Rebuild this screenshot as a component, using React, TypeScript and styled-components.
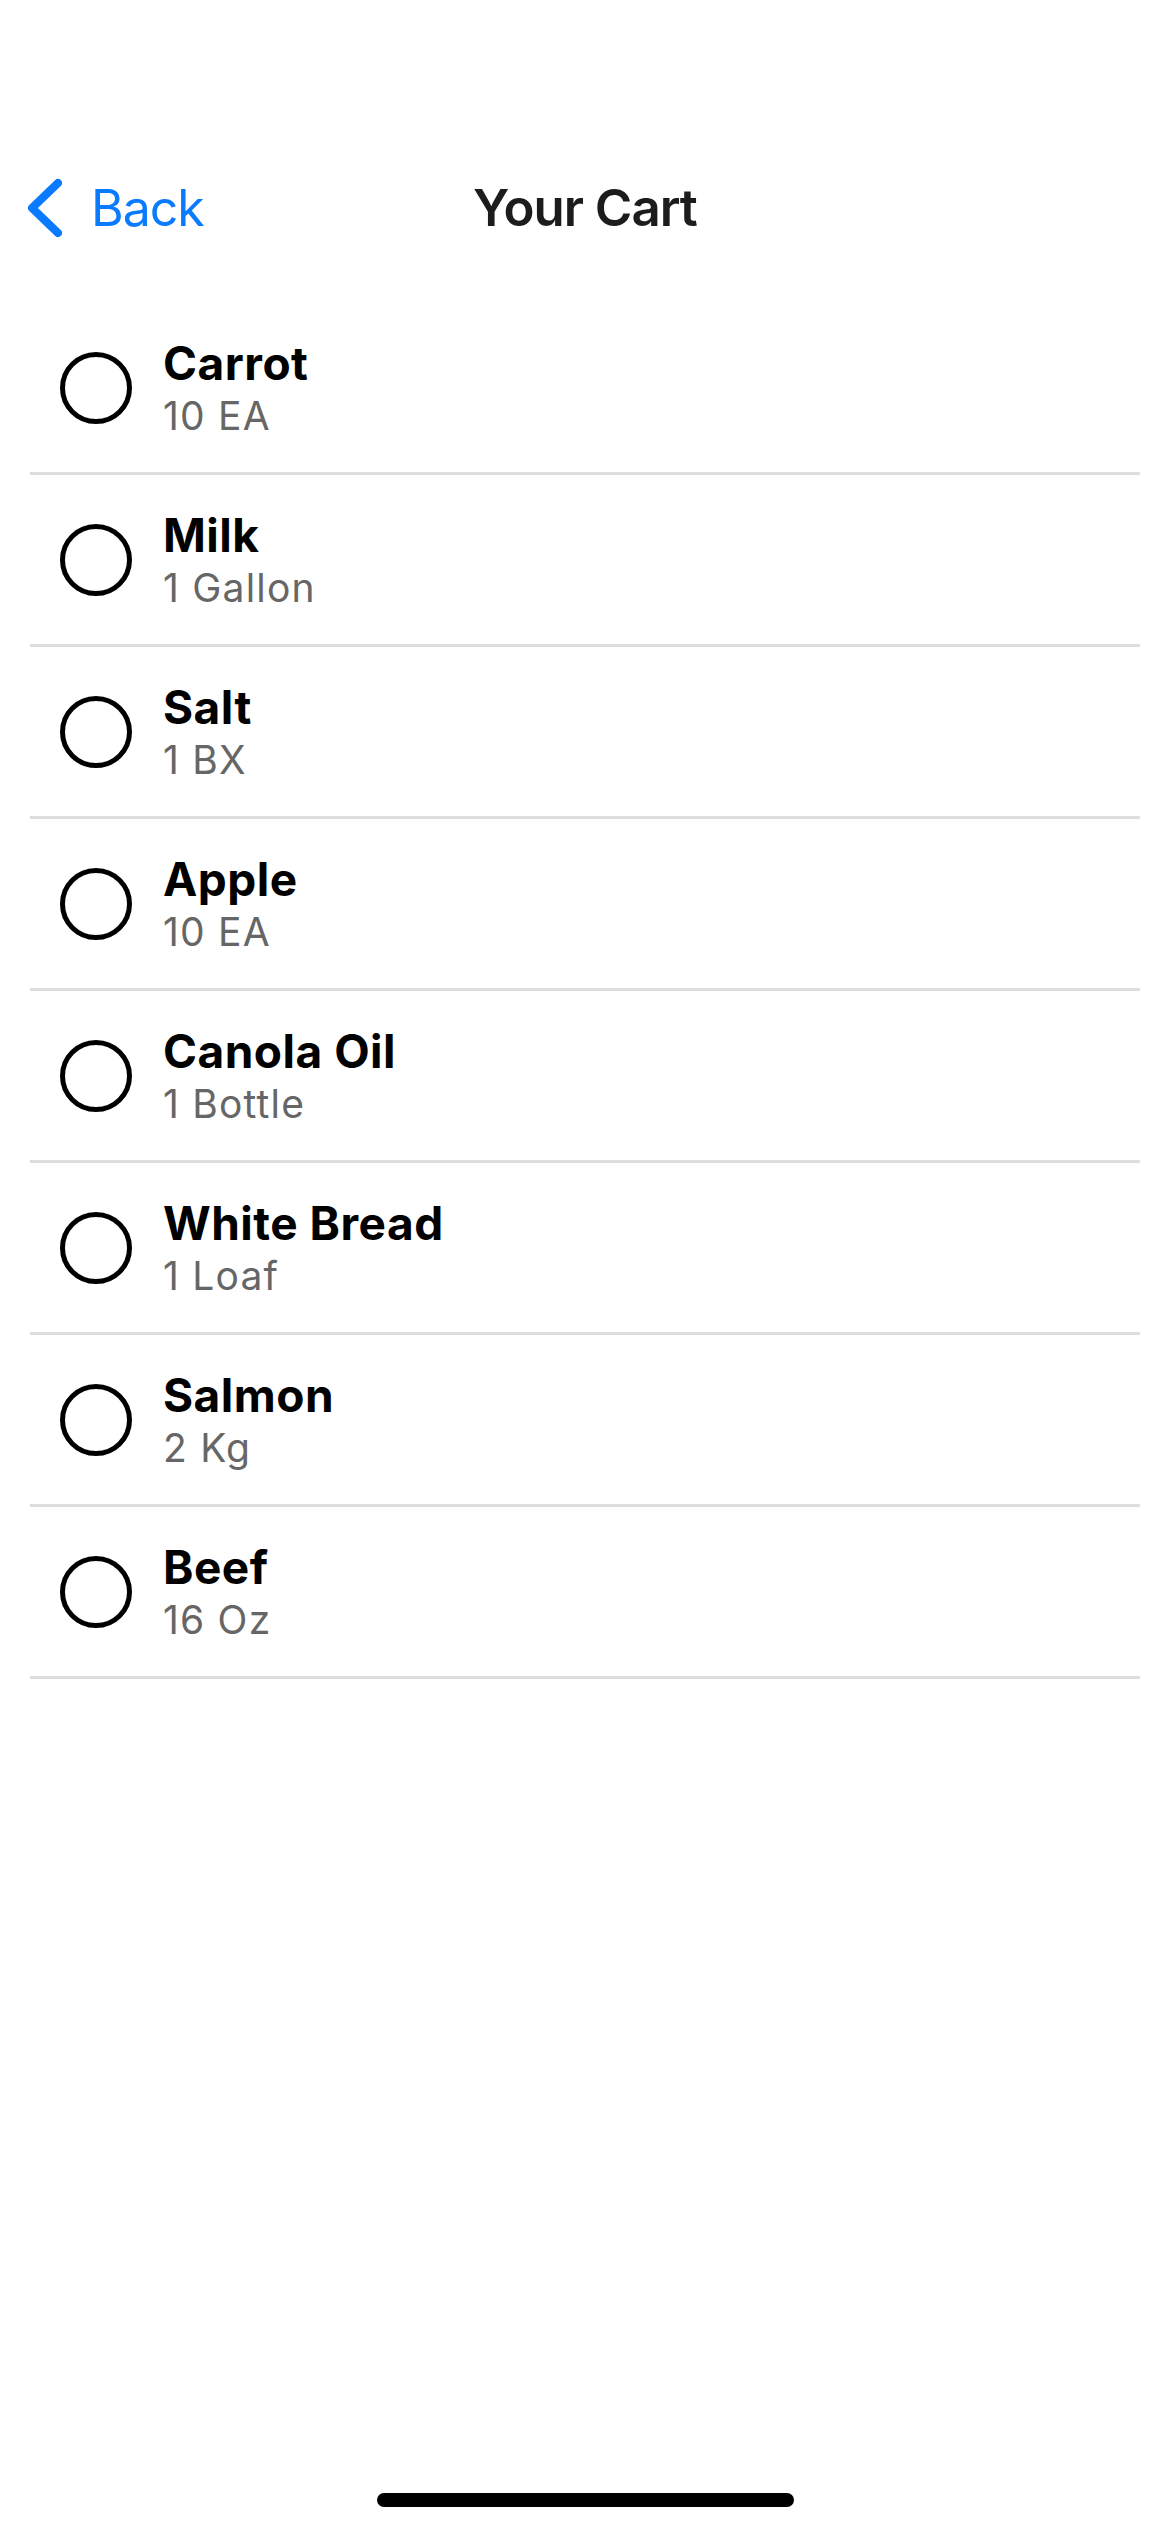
import React from 'react';
import styled, { createGlobalStyle } from 'styled-components';

const GlobalStyle = createGlobalStyle`
  html, body {
    margin: 0;
    padding: 0;
    background: #ffffff;
  }
  body {
    font-family: Inter, "Noto Sans", "Liberation Sans", sans-serif;
    -webkit-font-smoothing: antialiased;
  }
`;

const Page = styled.div`
  width: 1170px;
  min-height: 2532px;
  display: flex;
  flex-direction: column;
  background: #ffffff;
`;

const NavBar = styled.header`
  margin-top: 150px;
  height: 115px;
  display: grid;
  grid-template-columns: 1fr auto 1fr;
  align-items: center;
`;

const BackButton = styled.button`
  display: flex;
  align-items: center;
  gap: 29px;
  padding: 0 0 0 26px;
  background: none;
  border: none;
  color: #0a7aff;
  font-family: inherit;
  font-size: 50px;
  font-weight: 400;
  line-height: 1.2;
  letter-spacing: -1px;
  cursor: pointer;
  justify-self: start;
`;

const Title = styled.h1`
  margin: 0;
  font-size: 51px;
  font-weight: 600;
  line-height: 1.2;
  color: #1c1c1e;
  letter-spacing: -1px;
`;

const List = styled.ul`
  list-style: none;
  margin: 38px 0 0;
  padding: 0;
`;

const Row = styled.li`
  margin: 0 30px;
  height: 169px;
  display: flex;
  align-items: center;
  gap: 31px;
  padding-left: 30px;
  border-bottom: 3px solid #dddddd;
`;

const CheckCircle = styled.span<{ checked?: boolean }>`
  width: 72px;
  height: 72px;
  box-sizing: border-box;
  border-radius: 50%;
  border: 5px solid #000000;
  background: ${p => (p.checked ? '#000' : 'transparent')};
  flex-shrink: 0;
`;

const ItemText = styled.div`
  display: flex;
  flex-direction: column;
  gap: 4px;
`;

const ItemName = styled.span`
  font-size: 46px;
  font-weight: 700;
  line-height: 52px;
  color: #000000;
  letter-spacing: 0.5px;
`;

const ItemQty = styled.span`
  font-size: 39px;
  font-weight: 400;
  line-height: 46px;
  color: #666666;
  letter-spacing: 1.2px;
`;

const HomeIndicator = styled.div`
  margin: auto auto 25px;
  width: 417px;
  height: 14px;
  border-radius: 7px;
  background: #000000;
`;

const items = [
  { name: 'Carrot', qty: '10 EA' },
  { name: 'Milk', qty: '1 Gallon' },
  { name: 'Salt', qty: '1 BX' },
  { name: 'Apple', qty: '10 EA' },
  { name: 'Canola Oil', qty: '1 Bottle' },
  { name: 'White Bread', qty: '1 Loaf' },
  { name: 'Salmon', qty: '2 Kg' },
  { name: 'Beef', qty: '16 Oz' },
];

const App: React.FC = () => {
  return (
    <Page>
      <GlobalStyle />
      <NavBar>
        <BackButton>
          <svg width="36" height="60" viewBox="0 0 36 60" fill="none">
            <path d="M32 5 L6 30 L32 55" stroke="#0a7aff" strokeWidth="8" strokeLinecap="round" strokeLinejoin="round" />
          </svg>
          Back
        </BackButton>
        <Title>Your Cart</Title>
        <div />
      </NavBar>
      <List>
        {items.map(item => (
          <Row key={item.name}>
            <CheckCircle />
            <ItemText>
              <ItemName>{item.name}</ItemName>
              <ItemQty>{item.qty}</ItemQty>
            </ItemText>
          </Row>
        ))}
      </List>
      <HomeIndicator />
    </Page>
  );
};

export default App;
